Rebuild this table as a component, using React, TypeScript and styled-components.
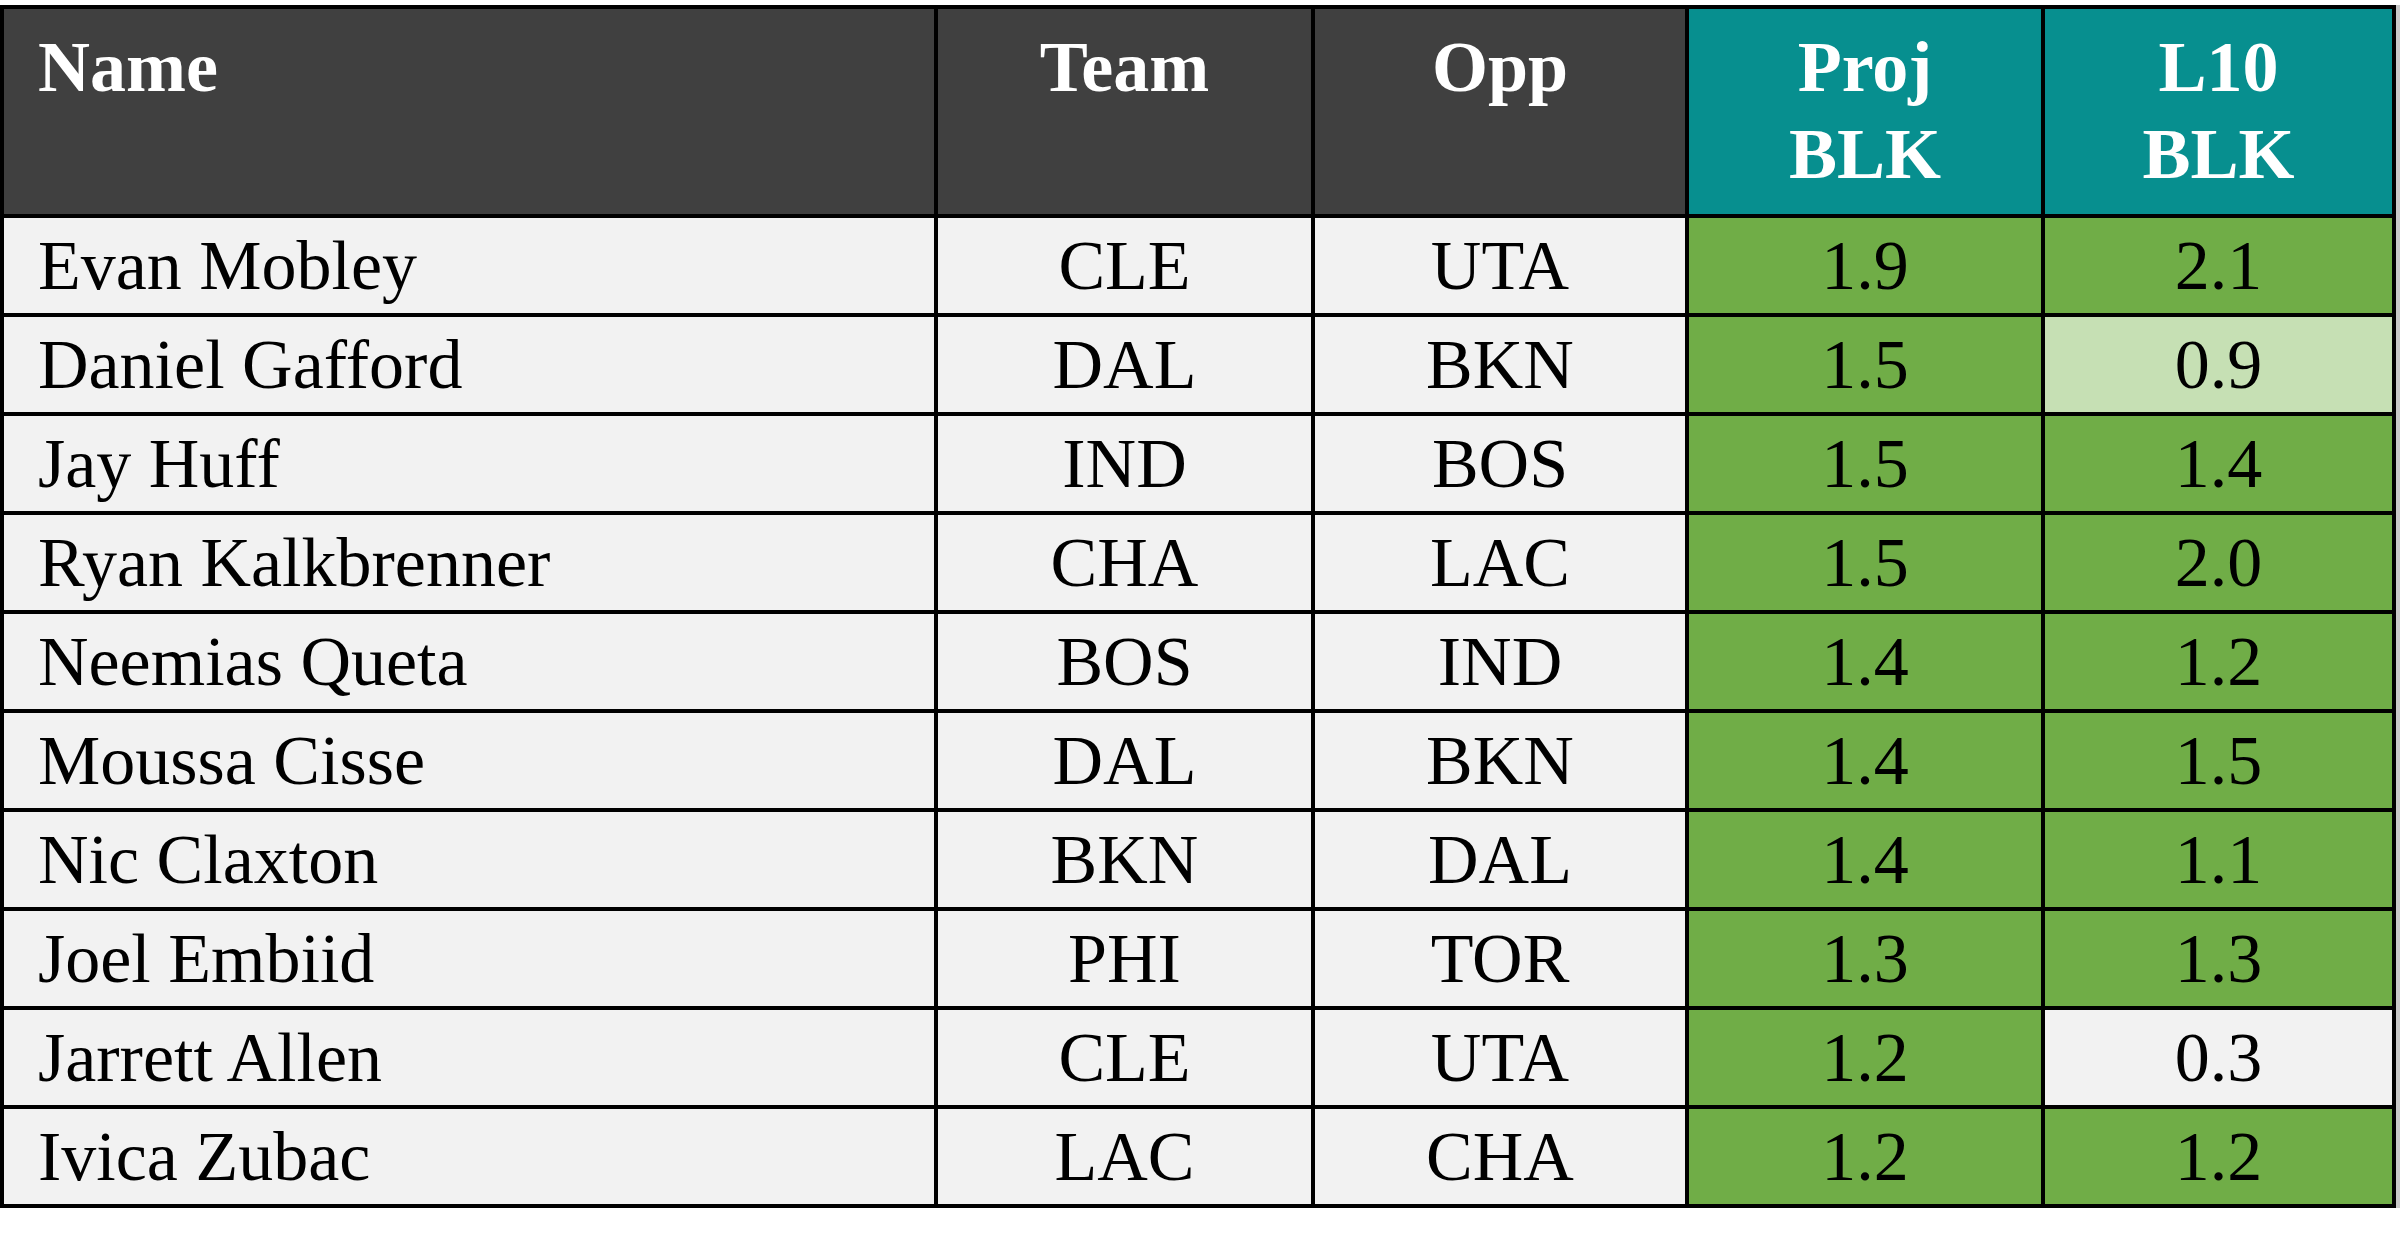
import React from 'react'
import styled, { createGlobalStyle } from 'styled-components';

const GlobalStyle = createGlobalStyle`
  html, body {
    margin: 0;
    padding: 0;
    background: #ffffff;
  }
`

type Row = {
  name: string
  team: string
  opp: string
  proj: string
  l10: string
  l10Tone: 'strong' | 'light' | 'none'
}

const rows: Row[] = [
  { name: 'Evan Mobley', team: 'CLE', opp: 'UTA', proj: '1.9', l10: '2.1', l10Tone: 'strong' },
  { name: 'Daniel Gafford', team: 'DAL', opp: 'BKN', proj: '1.5', l10: '0.9', l10Tone: 'light' },
  { name: 'Jay Huff', team: 'IND', opp: 'BOS', proj: '1.5', l10: '1.4', l10Tone: 'strong' },
  { name: 'Ryan Kalkbrenner', team: 'CHA', opp: 'LAC', proj: '1.5', l10: '2.0', l10Tone: 'strong' },
  { name: 'Neemias Queta', team: 'BOS', opp: 'IND', proj: '1.4', l10: '1.2', l10Tone: 'strong' },
  { name: 'Moussa Cisse', team: 'DAL', opp: 'BKN', proj: '1.4', l10: '1.5', l10Tone: 'strong' },
  { name: 'Nic Claxton', team: 'BKN', opp: 'DAL', proj: '1.4', l10: '1.1', l10Tone: 'strong' },
  { name: 'Joel Embiid', team: 'PHI', opp: 'TOR', proj: '1.3', l10: '1.3', l10Tone: 'strong' },
  { name: 'Jarrett Allen', team: 'CLE', opp: 'UTA', proj: '1.2', l10: '0.3', l10Tone: 'none' },
  { name: 'Ivica Zubac', team: 'LAC', opp: 'CHA', proj: '1.2', l10: '1.2', l10Tone: 'strong' },
]

const toneColors = {
  strong: '#70ad47',
  light: '#c6e0b4',
  none: '#f2f2f2',
}

export default function App() {
  return (
    <>
      <GlobalStyle />
      <Page>
        <StatTable>
          <thead>
            <tr>
              <HeadCell $width={934} $align="left" $tone="dark">Name</HeadCell>
              <HeadCell $width={377} $tone="dark">Team</HeadCell>
              <HeadCell $width={374} $tone="dark">Opp</HeadCell>
              <HeadCell $width={356} $tone="teal">Proj<br />BLK</HeadCell>
              <HeadCell $width={351} $tone="teal">L10<br />BLK</HeadCell>
            </tr>
          </thead>
          <tbody>
            {rows.map((r) => (
              <tr key={r.name}>
                <BodyCell $align="left">{r.name}</BodyCell>
                <BodyCell>{r.team}</BodyCell>
                <BodyCell>{r.opp}</BodyCell>
                <BodyCell $bg={toneColors.strong}>{r.proj}</BodyCell>
                <BodyCell $bg={toneColors[r.l10Tone]}>{r.l10}</BodyCell>
              </tr>
            ))}
          </tbody>
        </StatTable>
      </Page>
    </>
  );
}

const Page = styled.div`
  padding-top: 5px;
  width: 2400px;
  height: 1240px;
  background: #ffffff;
`

const StatTable = styled.table`
  border-collapse: separate;
  border-spacing: 0;
  table-layout: fixed;
  width: 2396px;
  border-left: 4px solid #000000;
  border-top: 4px solid #000000;
  box-shadow: 4px 0 0 #c8c8c8;
  font-family: "Liberation Serif", "Times New Roman", serif;
  color: #000000;
`

const HeadCell = styled.th<{ $width: number; $align?: 'left' | 'center'; $tone: 'dark' | 'teal' }>`
  box-sizing: border-box;
  width: ${(p) => p.$width}px;
  height: 209px;
  padding: 15px 0 0 ${(p) => (p.$align === 'left' ? '34px' : '0')};
  text-align: ${(p) => p.$align ?? 'center'};
  vertical-align: top;
  background-color: ${(p) => (p.$tone === 'teal' ? '#078f8f' : '#404040')};
  color: #ffffff;
  font-size: 72px;
  font-weight: 700;
  line-height: 87px;
  border-right: 4px solid #000000;
  border-bottom: 4px solid #000000;
`

const BodyCell = styled.td<{ $align?: 'left' | 'center'; $bg?: string }>`
  box-sizing: border-box;
  height: 99px;
  padding: 0 0 0 ${(p) => (p.$align === 'left' ? '34px' : '0')};
  text-align: ${(p) => p.$align ?? 'center'};
  vertical-align: middle;
  background-color: ${(p) => p.$bg ?? '#f2f2f2'};
  font-size: 70px;
  font-weight: 400;
  line-height: 1;
  white-space: nowrap;
  border-right: 4px solid #000000;
  border-bottom: 4px solid #000000;
`
